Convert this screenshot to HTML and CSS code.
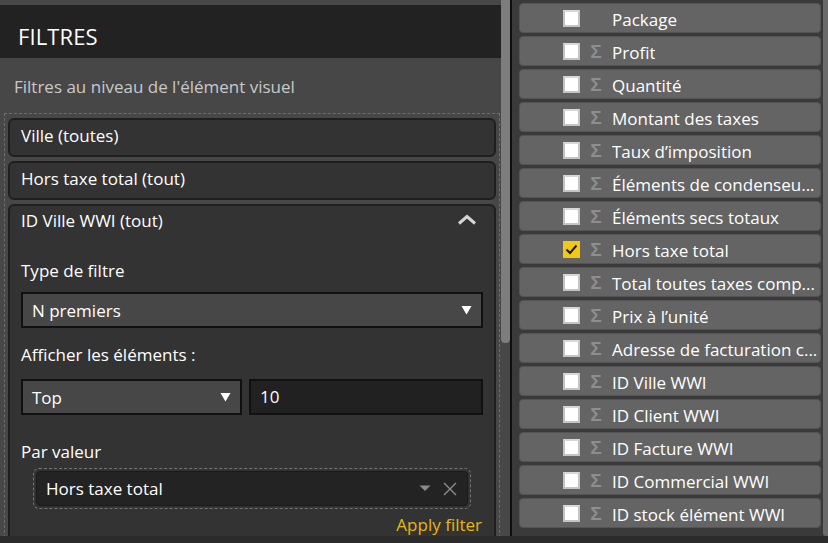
FILE: index.html
```html
<!DOCTYPE html>
<html lang="fr">
<head>
<meta charset="utf-8">
<title>Filtres</title>
<link rel="stylesheet" href="styles.css">
</head>
<body>
<div class="screen">
  <div class="main">
    <section class="filters">
      <div class="filters-body">
        <div class="topstrip"></div>
        <header class="pane-header">FILTRES</header>
        <div class="subtitle">Filtres au niveau de l'élément visuel</div>
        <div class="dropzone">
          <div class="card"><div class="card-head">Ville (toutes)</div></div>
          <div class="card"><div class="card-head">Hors taxe total (tout)</div></div>
          <div class="card expanded">
            <div class="card-head exp-head">
              <span>ID Ville WWI (tout)</span>
              <svg class="chevron" width="20" height="11" viewBox="0 0 20 11"><path d="M2 9.5 L10 2.5 L18 9.5" fill="none" stroke="#d4d4d4" stroke-width="3"/></svg>
            </div>
            <div class="card-body">
              <div class="label l-type">Type de filtre</div>
              <div class="select wide">
                <span>N premiers</span>
                <svg class="arrow" width="11" height="10" viewBox="0 0 11 10"><polygon points="0.5,1 10.5,1 5.5,9.5" fill="#ffffff"/></svg>
              </div>
              <div class="label l-show">Afficher les éléments :</div>
              <div class="pair">
                <div class="select half">
                  <span>Top</span>
                  <svg class="arrow" width="11" height="10" viewBox="0 0 11 10"><polygon points="0.5,1 10.5,1 5.5,9.5" fill="#ffffff"/></svg>
                </div>
                <div class="input">10</div>
              </div>
              <div class="label l-val">Par valeur</div>
              <div class="value-drop">
                <div class="value-box">
                  <span>Hors taxe total</span>
                  <svg class="mini-tri" width="12" height="7" viewBox="0 0 12 7"><polygon points="0.5,0.5 11.5,0.5 6,6" fill="#8a8a8a"/></svg>
                  <svg class="clear" width="14" height="14" viewBox="0 0 14 14"><path d="M1 1 L13 13 M13 1 L1 13" stroke="#8c8c8c" stroke-width="1.4"/></svg>
                </div>
              </div>
              <div class="apply">Apply filter</div>
            </div>
          </div>
        </div>
      </div>
      <div class="vscroll"><div class="thumb"></div></div>
    </section>
    <div class="divider"></div>
    <section class="fields">
      <ul class="field-list">
        <li class="field"><span class="cb"></span><span class="sig"></span><span class="name">Package</span></li>
        <li class="field"><span class="cb"></span><span class="sig">Σ</span><span class="name">Profit</span></li>
        <li class="field"><span class="cb"></span><span class="sig">Σ</span><span class="name">Quantité</span></li>
        <li class="field"><span class="cb"></span><span class="sig">Σ</span><span class="name">Montant des taxes</span></li>
        <li class="field"><span class="cb"></span><span class="sig">Σ</span><span class="name">Taux d’imposition</span></li>
        <li class="field"><span class="cb"></span><span class="sig">Σ</span><span class="name">Éléments de condenseu...</span></li>
        <li class="field"><span class="cb"></span><span class="sig">Σ</span><span class="name">Éléments secs totaux</span></li>
        <li class="field"><span class="cb checked"><svg width="17" height="17" viewBox="0 0 17 17"><path d="M3.5 8.5 L7 12 L13.5 4.5" fill="none" stroke="#1a1a1a" stroke-width="2"/></svg></span><span class="sig">Σ</span><span class="name">Hors taxe total</span></li>
        <li class="field"><span class="cb"></span><span class="sig">Σ</span><span class="name">Total toutes taxes comp...</span></li>
        <li class="field"><span class="cb"></span><span class="sig">Σ</span><span class="name">Prix à l’unité</span></li>
        <li class="field"><span class="cb"></span><span class="sig">Σ</span><span class="name">Adresse de facturation c...</span></li>
        <li class="field"><span class="cb"></span><span class="sig">Σ</span><span class="name">ID Ville WWI</span></li>
        <li class="field"><span class="cb"></span><span class="sig">Σ</span><span class="name">ID Client WWI</span></li>
        <li class="field"><span class="cb"></span><span class="sig">Σ</span><span class="name">ID Facture WWI</span></li>
        <li class="field"><span class="cb"></span><span class="sig">Σ</span><span class="name">ID Commercial WWI</span></li>
        <li class="field"><span class="cb"></span><span class="sig">Σ</span><span class="name">ID stock élément WWI</span></li>
      </ul>
      <div class="rscroll"></div>
    </section>
  </div>
  <div class="bottom-strip"></div>
</div>
</body>
</html>
```

FILE: styles.css
```css
* { box-sizing: border-box; }
html, body { margin: 0; padding: 0; }
body {
  background: #2b2b2b;
  font-family: "Open Sans", "Noto Sans", sans-serif;
  color: #ffffff;
  overflow: hidden;
}
.screen { width: 828px; height: 543px; display: flex; flex-direction: column; }
.main { height: 536px; display: flex; flex: none; }
.bottom-strip { height: 7px; background: #2b2b2b; }

/* left pane */
.filters { width: 510px; display: flex; background: #474747; }
.filters-body { width: 501px; flex: none; overflow: hidden; }
.topstrip { height: 5px; background: #474747; }
.pane-header {
  height: 53px; background: #222222; padding: 9px 0 0 18px;
  font-size: 22px; line-height: 44px; letter-spacing: 0.1px; color: #ffffff;
}
.subtitle {
  height: 55px; padding: 18px 0 0 14px;
  font-size: 17px; line-height: 22px; color: #c9c9c9;
}
.dropzone {
  margin-left: 4px; width: 496px; height: 430px;
  border: 1px dashed #6e6e6e; border-bottom: none;
  padding: 4px 3px 0 3px;
  display: flex; flex-direction: column; gap: 4px;
}
.card {
  background: #333333; border: 2px solid #1f1f1f; border-radius: 6px;
}
.card-head {
  height: 35px; line-height: 32px; padding-left: 11px; font-size: 17px;
}
.expanded { flex: 1; border-bottom: none; border-radius: 6px 6px 0 0; }
.exp-head { height: 31px; line-height: 28px; display: flex; align-items: center; justify-content: space-between; padding-right: 17px; }
.exp-head span { line-height: 28px; margin-top: -2px; }
.chevron { margin-top: -4px; }
.card-body { padding: 0 11px; display: flex; flex-direction: column; }
.label { font-size: 17px; line-height: 22px; }
.l-type { margin-top: 23px; }
.l-show { margin-top: 16px; }
.l-val { margin-top: 26px; }
.select {
  height: 36px; background: #474747; border: 2px solid #111111;
  display: flex; align-items: center; justify-content: space-between;
  padding: 0 9px 0 9px; font-size: 17px;
}
.wide { margin-top: 10px; }
.pair { margin-top: 13px; display: flex; gap: 7px; }
.half { width: 221px; }
.input {
  flex: 1; height: 36px; background: #212121; border: 2px solid #111111;
  padding-left: 9px; font-size: 17px; line-height: 32px;
}
.value-drop {
  margin: 5px 12px 0 12px; height: 41px;
  border: 1px dashed #747474; border-radius: 6px; padding: 2px;
}
.value-box {
  height: 100%; background: #232323; border: 1px solid #1a1a1a; border-radius: 4px;
  display: flex; align-items: center; padding: 0 10px 0 9px; font-size: 17px;
}
.value-box span { flex: 1; }
.mini-tri { margin-right: 12px; }
.apply {
  margin-top: 6px; align-self: flex-end; margin-right: 1px;
  color: #e8b60f; font-size: 17px; line-height: 20px;
}
.vscroll { width: 9px; background: #474747; }
.thumb { height: 343px; background: #7d7d7d; border-radius: 0 0 4px 4px; }
.divider { width: 2px; background: #0e0e0e; }

/* right pane */
.fields { width: 316px; background: #3a3a3a; display: flex; }
.field-list {
  list-style: none; margin: 0; padding: 3px 0 0 7px; width: 309px;
  display: flex; flex-direction: column; gap: 3px;
}
.field {
  height: 30px; width: 302px; background: #646464;
  border: 1px solid #545454; border-radius: 4px;
  display: flex; align-items: center; padding-left: 43px;
  font-size: 17px;
}
.cb {
  width: 17px; height: 17px; flex: none; background: #ffffff;
  border: 2px solid #c4c4c4; border-top-color: #d8d8d8; margin-right: 8px;
  display: flex;
}
.cb.checked { background: #f2c811; border: none; }
.sig {
  width: 16px; flex: none; color: #8e8e8e; margin-right: 8px; text-align: center;
  font-family: "Liberation Sans", sans-serif; font-weight: 700; font-size: 19px; line-height: 22px; padding-top: 1px;
}
.name { white-space: nowrap; overflow: hidden; line-height: 22px; padding-top: 3px; }
.rscroll { width: 5px; margin-left: 2px; background: #6a6a6a; border-radius: 0 0 0 3px; }
```
